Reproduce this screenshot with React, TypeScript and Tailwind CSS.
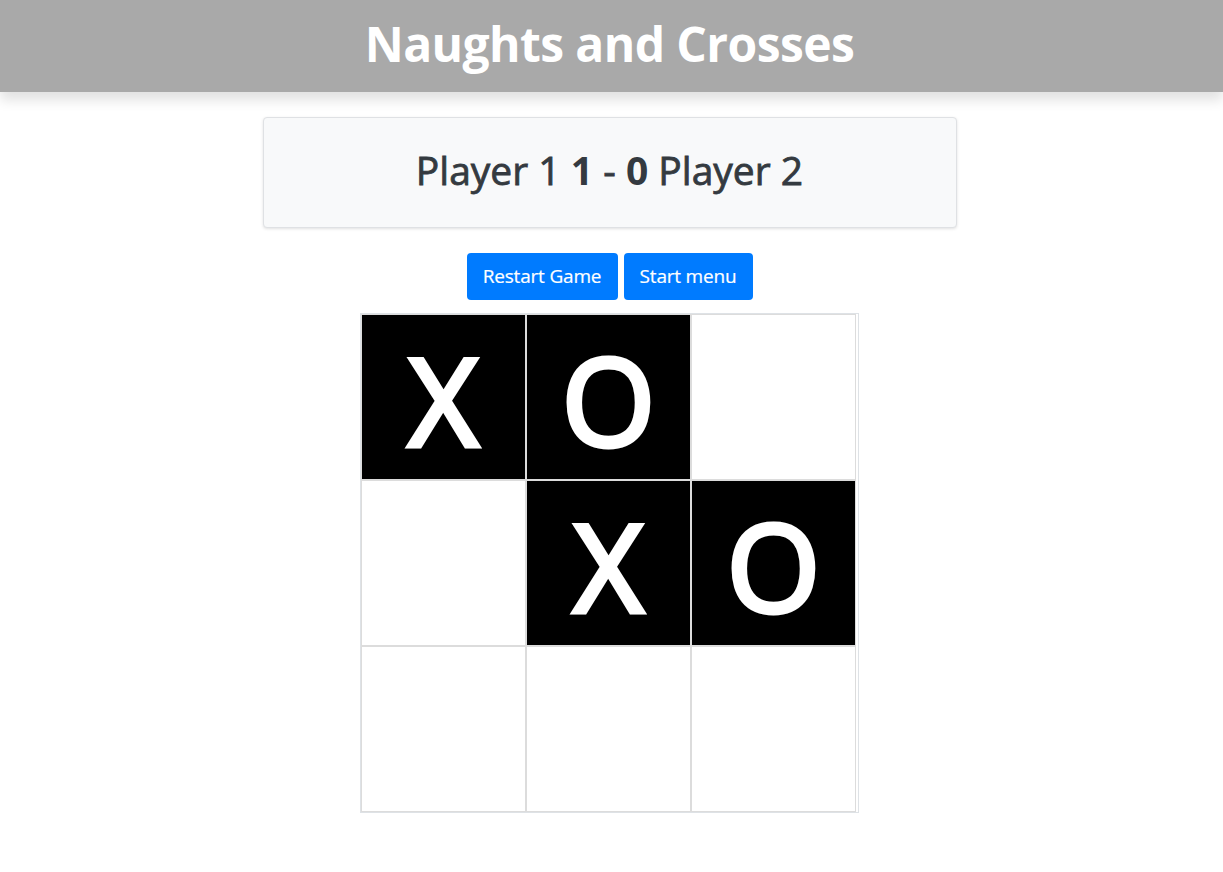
import React from "react";

const board: (string | null)[] = ["X", "O", null, null, "X", "O", null, null, null];

export default function App() {
  return (
    <div className="min-h-[872px] bg-white font-['Open_Sans','Noto_Sans',sans-serif]">
      <header className="h-[92px] bg-[#a9a9a9] flex items-center justify-center shadow-[0_8px_12px_rgba(0,0,0,0.12)] relative pr-[4px]">
        <h1 className="text-white font-bold text-[48px] leading-none tracking-[-0.6px] pb-[4px]">
          Naughts and Crosses
        </h1>
      </header>
      <div className="flex flex-col items-center pr-[4px]">
        <div className="mt-[25px] w-[694px] h-[111px] bg-[#f8f9fa] border border-[#dfe1e4] rounded-[4px] shadow-[0_1px_3px_rgba(0,0,0,0.12)] flex items-center justify-center">
          <h2 className="text-[#343a40] text-[39px] leading-none pb-[6px] [-webkit-text-stroke:0.8px_#343a40]">
            Player 1 <span className="font-bold [-webkit-text-stroke:0px]">1</span> - <span className="font-bold [-webkit-text-stroke:0px]">0</span> Player 2
          </h2>
        </div>
        <div className="mt-[25px] flex gap-[6px]">
          <button className="h-[47px] w-[151px] bg-[#007bff] text-white text-[19px] rounded-[4px] tracking-[-0.2px] [-webkit-text-stroke:0.2px_white]">
            Restart Game
          </button>
          <button className="h-[47px] w-[129px] bg-[#007bff] text-white text-[19px] rounded-[4px] tracking-[-0.2px] [-webkit-text-stroke:0.2px_white]">
            Start menu
          </button>
        </div>
        <div className="mt-[13px] w-[499px] border border-[#dee2e6] grid grid-cols-[165px_165px_165px] grid-rows-[166px_166px_166px] pr-[2px]">
          {board.map((v, i) => (
            <div
              key={i}
              className={`border-[0.5px] border-[#dcdcdc] flex items-center justify-center ${
                v ? "bg-black" : "bg-white"
              }`}
            >
              {v && (
                <span className="text-white text-[120px] leading-none pt-[6px] [-webkit-text-stroke:5px_white]">
                  {v}
                </span>
              )}
            </div>
          ))}
        </div>
      </div>
    </div>
  );
}
